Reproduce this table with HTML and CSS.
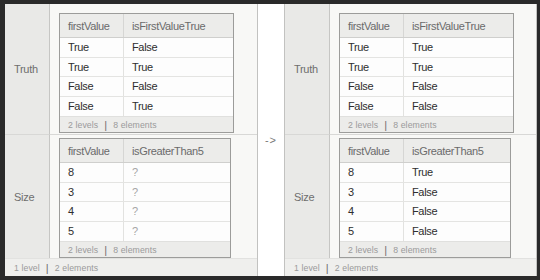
FILE: index.html
```html
<!DOCTYPE html>
<html>
<head>
<meta charset="utf-8">
<link rel="stylesheet" href="styles.css">
</head>
<body>
<div class="screen">
  <div class="assoc">
    <div class="key">Truth</div>
    <div class="val val-top">
      <div class="ds">
        <div class="row head"><span class="c1">firstValue</span><span class="c2">isFirstValueTrue</span></div>
        <div class="row"><span class="c1">True</span><span class="c2">False</span></div>
        <div class="row"><span class="c1">True</span><span class="c2">True</span></div>
        <div class="row"><span class="c1">False</span><span class="c2">False</span></div>
        <div class="row last"><span class="c1">False</span><span class="c2">True</span></div>
        <div class="info">2 levels<span class="sep">|</span>8 elements</div>
      </div>
    </div>
    <div class="key">Size</div>
    <div class="val val-bottom">
      <div class="ds narrow">
        <div class="row head"><span class="c1">firstValue</span><span class="c2">isGreaterThan5</span></div>
        <div class="row"><span class="c1">8</span><span class="c2 muted">?</span></div>
        <div class="row"><span class="c1">3</span><span class="c2 muted">?</span></div>
        <div class="row"><span class="c1">4</span><span class="c2 muted">?</span></div>
        <div class="row last"><span class="c1">5</span><span class="c2 muted">?</span></div>
        <div class="info">2 levels<span class="sep">|</span>8 elements</div>
      </div>
    </div>
    <div class="outer-info">1 level<span class="sep">|</span>2 elements</div>
  </div>

  <div class="arrow">-&gt;</div>

  <div class="assoc right">
    <div class="key">Truth</div>
    <div class="val val-top">
      <div class="ds">
        <div class="row head"><span class="c1">firstValue</span><span class="c2">isFirstValueTrue</span></div>
        <div class="row"><span class="c1">True</span><span class="c2">True</span></div>
        <div class="row"><span class="c1">True</span><span class="c2">True</span></div>
        <div class="row"><span class="c1">False</span><span class="c2">False</span></div>
        <div class="row last"><span class="c1">False</span><span class="c2">False</span></div>
        <div class="info">2 levels<span class="sep">|</span>8 elements</div>
      </div>
    </div>
    <div class="key">Size</div>
    <div class="val val-bottom">
      <div class="ds narrow">
        <div class="row head"><span class="c1">firstValue</span><span class="c2">isGreaterThan5</span></div>
        <div class="row"><span class="c1">8</span><span class="c2">True</span></div>
        <div class="row"><span class="c1">3</span><span class="c2">False</span></div>
        <div class="row"><span class="c1">4</span><span class="c2">False</span></div>
        <div class="row last"><span class="c1">5</span><span class="c2">False</span></div>
        <div class="info">2 levels<span class="sep">|</span>8 elements</div>
      </div>
    </div>
    <div class="outer-info">1 level<span class="sep">|</span>2 elements</div>
  </div>
</div>
</body>
</html>
```

FILE: styles.css
```css
html, body {
  margin: 0;
  padding: 0;
  background: #2a2a2a;
  height: 100%;
}

body {
  font-family: "Liberation Sans", Arial, sans-serif;
  color: #2e2e2e;
}

.screen {
  margin: 4px 0 0 5px;
  width: 532px;
  height: 272px;
  background: #ffffff;
  display: flex;
}

/* one association panel: key column + value column, info bar at the bottom */
.assoc {
  width: 253px;
  box-sizing: border-box;
  display: grid;
  grid-template-columns: 45px 1fr;
  grid-template-rows: 131px 123px 18px;
  border-right: 1px solid #c2c2c0;
  background: #f8f8f6;
}

.assoc.right {
  border-left: 1px solid #c2c2c0;
}

.key {
  background: #e9e9e7;
  border-right: 1px solid #c6c6c4;
  display: flex;
  align-items: center;
  padding-left: 9px;
  font-size: 11px;
  letter-spacing: -0.3px;
  color: #6e6e6e;
}

.key:first-child,
.val-top {
  border-bottom: 1px solid #d8d8d6;
}

.val {
  padding-left: 9px;
}

.val-top {
  padding-top: 9px;
}

.val-bottom {
  padding-top: 3px;
}

/* nested dataset table */
.ds {
  width: 175px;
  box-sizing: border-box;
  border: 1px solid #9c9c9a;
  background: #fdfdfd;
  font-size: 11px;
  letter-spacing: -0.35px;
}

.ds.narrow {
  width: 172px;
}

.row {
  display: flex;
  height: 19.5px;
  box-sizing: border-box;
  border-bottom: 1px solid #e4e4e2;
  align-items: center;
}

.row.last {
  border-bottom: none;
}

.row.head {
  height: 24px;
  background: #ececea;
  border-bottom: 1px solid #cfcfcd;
  color: #6a6a6a;
}

.c1 {
  width: 64px;
  flex: none;
  box-sizing: border-box;
  padding-left: 8px;
  height: 100%;
  display: flex;
  align-items: center;
  border-right: 1px solid #e2e2e0;
}

.head .c1 {
  border-right-color: #d6d6d4;
}

.c2 {
  padding-left: 8px;
}

.muted {
  color: #a6a6a6;
}

.info {
  height: 15px;
  background: #ececea;
  border-top: 1px solid #e0e0de;
  display: flex;
  align-items: center;
  padding-left: 8px;
  font-size: 8.7px;
  letter-spacing: 0.1px;
  color: #9a9a9a;
}

.sep {
  color: #707070;
  margin: 0 6px;
  font-size: 11px;
}

.outer-info {
  grid-column: 1 / 3;
  background: #efefed;
  border-top: 1px solid #e2e2e0;
  display: flex;
  align-items: center;
  padding-left: 9px;
  font-size: 8.7px;
  letter-spacing: 0.1px;
  color: #9a9a9a;
}

.arrow {
  width: 26px;
  display: flex;
  align-items: center;
  justify-content: center;
  font-size: 11px;
  color: #777;
  letter-spacing: 1px;
}
```
